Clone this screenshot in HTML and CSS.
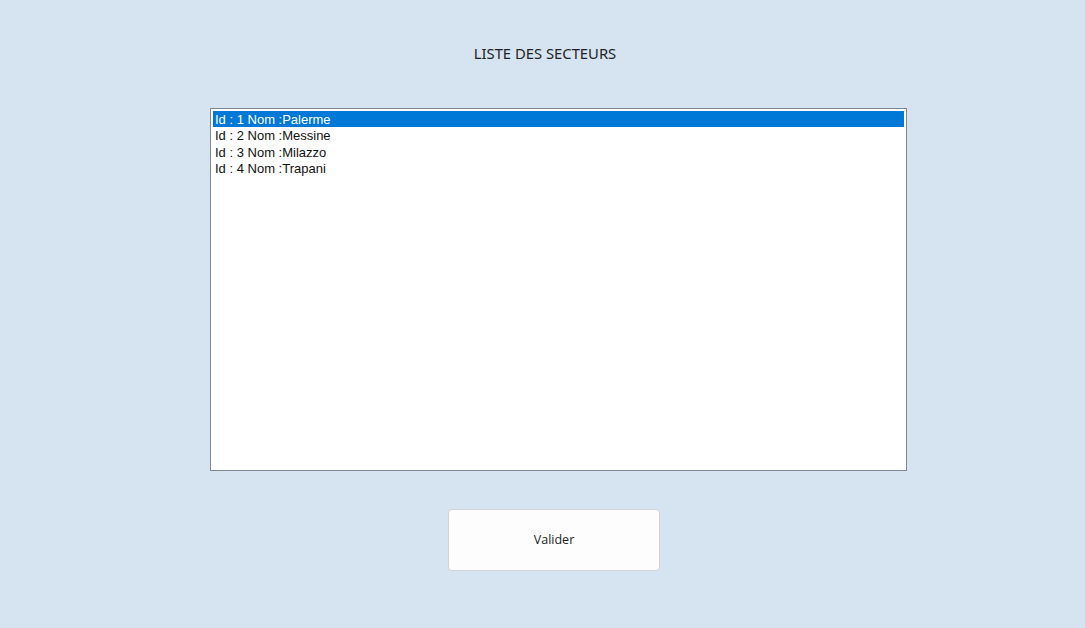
FILE: index.html
```html
<!DOCTYPE html>
<html lang="fr">
<head>
<meta charset="utf-8">
<title>Liste des secteurs</title>
<link rel="stylesheet" href="styles.css">
</head>
<body>
<div class="window">
  <div class="title">LISTE DES SECTEURS</div>
  <div class="listbox">
    <div class="item selected">Id : 1 Nom :Palerme</div>
    <div class="item">Id : 2 Nom :Messine</div>
    <div class="item">Id : 3 Nom :Milazzo</div>
    <div class="item">Id : 4 Nom :Trapani</div>
  </div>
  <div class="actions">
    <button class="btn">Valider</button>
  </div>
</div>
</body>
</html>
```
FILE: styles.css
```css
html, body {
  margin: 0;
  padding: 0;
  height: 100%;
}
body {
  background: #d6e4f1;
  font-family: "Liberation Sans", Arial, sans-serif;
  color: #1a1a1a;
}
.window {
  display: flex;
  flex-direction: column;
  align-items: center;
}
.title {
  margin-top: 44px;
  margin-left: 5px;
  height: 18px;
  line-height: 18px;
  font-family: "Noto Sans", "Open Sans", sans-serif;
  font-size: 14.8px;
  color: #222;
}
.listbox {
  margin-top: 46px;
  margin-left: 32px;
  box-sizing: border-box;
  width: 697px;
  height: 363px;
  background: #fff;
  border: 1px solid #828790;
  padding: 2px 2px 2px 2px;
}
.item {
  height: 16.3px;
  line-height: 17px;
  font-size: 13px;
  padding-left: 2px;
  color: #111;
  white-space: nowrap;
}
.item.selected {
  background: #0078d7;
  color: #fff;
}
.actions {
  margin-top: 38px;
  margin-left: 23px;
}
.btn {
  box-sizing: border-box;
  width: 212px;
  height: 62px;
  background: #fdfdfd;
  border: 1px solid #cfd3d8;
  border-radius: 4px;
  font-family: "Open Sans", "Noto Sans", sans-serif;
  font-size: 12.5px;
  color: #222;
  padding: 0 0 1px 0;
}
```
